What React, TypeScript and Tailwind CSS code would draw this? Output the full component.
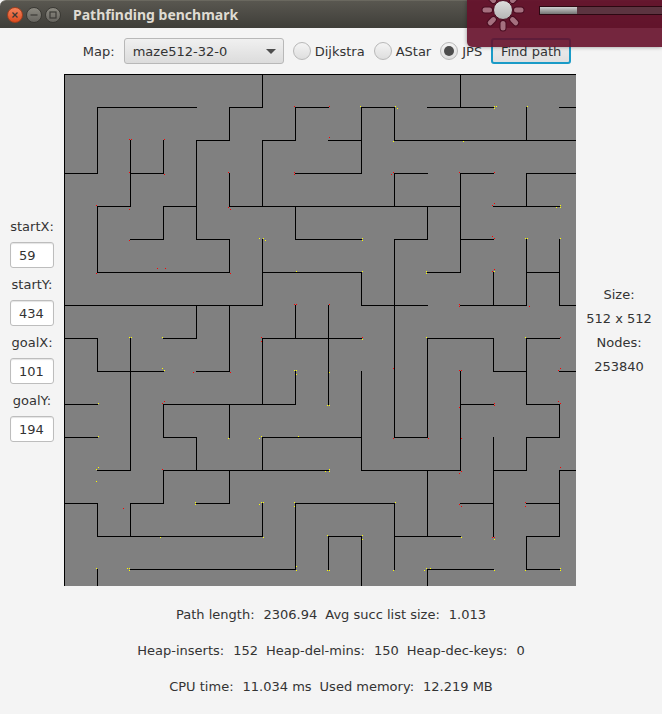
import { useState } from 'react';

const CELL = 33;
const SIZE = 512;

// Walls per grid line, as [from, to] in cells.
const horizontalWalls: number[][][] = [
  [[0, 16]],
  [[1, 4], [5, 6], [7, 8], [9, 10], [11, 13], [15, 16]],
  [[4, 5], [6, 7], [8, 9], [10, 16]],
  [[0, 1], [2, 3], [7, 9], [10, 11], [12, 13], [14, 16]],
  [[1, 2], [3, 4], [5, 12], [13, 15]],
  [[2, 3], [4, 5], [7, 9], [10, 11], [12, 13]],
  [[1, 5], [6, 9], [11, 12], [14, 15]],
  [[0, 6], [9, 11], [12, 14], [15, 16]],
  [[0, 1], [3, 4], [6, 9], [11, 13], [14, 15]],
  [[1, 3], [4, 5], [13, 14], [15, 16]],
  [[0, 1], [3, 7], [12, 13], [14, 15]],
  [[0, 1], [3, 4], [6, 9], [10, 11], [14, 15]],
  [[1, 2], [3, 8], [9, 12], [13, 14], [15, 16]],
  [[0, 1], [2, 3], [4, 5], [7, 10], [12, 13], [14, 15]],
  [[1, 6], [8, 9], [10, 12], [14, 15]],
  [[2, 7], [11, 13], [14, 15]],
];

const verticalWalls: number[][][] = [
  [[0, 16]],
  [[1, 3], [4, 6], [8, 9], [13, 14], [15, 16]],
  [[2, 4], [8, 12], [13, 14]],
  [[2, 3], [4, 5], [10, 11], [12, 13]],
  [[2, 5], [7, 8], [11, 12]],
  [[1, 2], [3, 4], [5, 6], [7, 9], [10, 11], [12, 13]],
  [[0, 1], [2, 4], [5, 7], [8, 10], [11, 12], [13, 14]],
  [[1, 2], [4, 5], [7, 8], [9, 10], [13, 15]],
  [[7, 10], [14, 15]],
  [[1, 3], [6, 7], [9, 12], [14, 16]],
  [[1, 2], [3, 4], [5, 11], [13, 15]],
  [[4, 5], [8, 11], [12, 14], [15, 16]],
  [[0, 1], [3, 6], [9, 12]],
  [[6, 7], [8, 9], [11, 14]],
  [[1, 2], [3, 4], [5, 7], [8, 10], [11, 12], [14, 15]],
  [[5, 7], [10, 11], [12, 14]],
];

const closedNodes: number[][] = [
  [65, 65], [67, 65], [100, 65], [65, 98], [100, 100], [32, 131], [65, 135], [65, 166],
  [164, 98], [164, 133], [166, 135], [230, 32], [265, 32], [265, 63], [230, 98], [230, 100],
  [329, 98], [327, 100], [395, 98], [430, 98], [430, 129], [428, 131], [428, 162], [430, 164],
  [93, 194], [101, 194], [32, 199], [166, 199], [129, 298], [166, 298], [100, 327], [98, 329],
  [230, 230], [232, 230], [265, 230], [197, 263], [197, 267], [298, 263], [329, 294],
  [430, 195], [428, 197], [395, 230], [395, 232], [465, 232], [496, 263], [496, 294], [494, 296],
  [395, 296], [397, 296], [430, 329], [430, 331], [494, 327], [496, 329], [395, 333],
  [98, 395], [59, 434], [329, 364], [364, 364], [397, 364], [496, 393], [397, 397], [395, 399],
  [395, 430], [397, 432], [461, 428], [461, 432], [428, 463], [430, 463],
];

const openNodes: number[][] = [
  [296, 32], [331, 32], [333, 34], [329, 67], [195, 164], [199, 164], [201, 166], [298, 164],
  [298, 166], [430, 32], [432, 32], [430, 34], [463, 32], [399, 67], [496, 131], [492, 133],
  [496, 133], [461, 164], [463, 164], [496, 164], [65, 263], [67, 263], [98, 263], [98, 294],
  [100, 296], [34, 329], [232, 197], [298, 197], [298, 265], [230, 296], [232, 296], [232, 300],
  [265, 298], [263, 331], [265, 331], [362, 197], [362, 199], [430, 197], [362, 263], [461, 263],
  [34, 362], [34, 393], [32, 395], [32, 407], [164, 364], [131, 428], [131, 430], [96, 463],
  [32, 494], [63, 494], [65, 494], [65, 496], [197, 362], [195, 364], [234, 362], [265, 395],
  [261, 397], [265, 397], [197, 428], [199, 428], [195, 430], [199, 463], [230, 428], [230, 432],
  [331, 428], [232, 492], [232, 496], [263, 461], [298, 461], [298, 465], [263, 496], [265, 496],
  [329, 496], [430, 465], [397, 463], [362, 494], [366, 494], [360, 496], [430, 496], [461, 496],
  [496, 494], [496, 496],
];

function MazeMap() {
  return (
    <svg viewBox={`0 0 ${SIZE} ${SIZE}`} shapeRendering="crispEdges" className="block w-full bg-[#808080]" role="img" aria-label="maze512-32-0">
      {horizontalWalls.flatMap((walls, row) =>
        walls.map(([from, to]) => (
          <rect key={`h${row}-${from}`} x={from * CELL} y={row * CELL} width={(to - from) * CELL + 1} height={1} />
        )),
      )}
      {verticalWalls.flatMap((walls, col) =>
        walls.map(([from, to]) => (
          <rect key={`v${col}-${from}`} x={col * CELL} y={from * CELL} width={1} height={(to - from) * CELL + 1} />
        )),
      )}
      {closedNodes.map(([x, y]) => (
        <rect key={`c${x}-${y}`} x={x} y={y} width={1} height={1} fill="#ff0000" />
      ))}
      {openNodes.map(([x, y]) => (
        <rect key={`o${x}-${y}`} x={x} y={y} width={1} height={1} fill="#ffff00" />
      ))}
    </svg>
  );
}

function WindowButton({ label, close, children }: { label: string; close?: boolean; children: React.ReactNode }) {
  return (
    <button
      aria-label={label}
      className={`size-4 rounded-full border ${
        close
          ? 'border-[#a33f1e] bg-linear-to-b from-[#f3835b] to-[#dd4a1b]'
          : 'border-[#3a3934] bg-linear-to-b from-[#8b8981] to-[#67655f]'
      }`}
    >
      <svg viewBox="0 0 14 14" className="block size-full" fill="none" stroke="#3b3a36">
        {children}
      </svg>
    </button>
  );
}

function TitleBar() {
  return (
    <header className="flex h-7 items-center rounded-tl-md border-t border-[#6a685f] bg-linear-to-b from-[#595750] to-[#3f3e39] pl-[7px]">
      <div className="flex gap-[3px]">
        <WindowButton label="Close" close>
          <path d="M4.5 4.5l5 5M9.5 4.5l-5 5" strokeWidth="1.3" />
        </WindowButton>
        <WindowButton label="Minimize">
          <path d="M3.5 7h7" strokeWidth="1.2" />
        </WindowButton>
        <WindowButton label="Maximize">
          <rect x="4" y="4" width="6" height="6" strokeWidth="1.2" />
        </WindowButton>
      </div>
      <h1 className="ml-3 font-['Noto_Sans','Open_Sans',sans-serif] text-[14px] leading-5 font-bold text-[#dfdbd2]">
        Pathfinding benchmark
      </h1>
    </header>
  );
}

const algorithms = ['Dijkstra', 'AStar', 'JPS'];

function Toolbar() {
  const [algorithm, setAlgorithm] = useState('JPS');
  return (
    <div className="flex items-center justify-center gap-[9px] py-2.5 pr-2">
      <label htmlFor="map">
        Map:
      </label>
      <div className="relative">
        <select
          id="map"
          className="block h-[26px] w-40 appearance-none rounded-[3px] border border-[#b8b8b8] bg-linear-to-b from-[#f0f0f0] to-[#dcdcdc] pt-0.5 pl-2 leading-4"
        >
          <option>maze512-32-0</option>
        </select>
        <svg viewBox="0 0 10 5" className="pointer-events-none absolute top-[11px] right-2 w-2.5" fill="#4d4d4d">
          <path d="M0 0h10L5 5z" />
        </svg>
      </div>
      {algorithms.map((name) => (
        <label key={name} className="flex items-center gap-1">
          <input
            type="radio"
            name="algorithm"
            checked={algorithm === name}
            onChange={() => setAlgorithm(name)}
            className="grid size-[18px] appearance-none place-items-center rounded-full border border-[#b8b8b8] bg-linear-to-b from-[#f4f4f4] to-[#dedede] before:size-2.5 before:rounded-full checked:before:bg-[#4d4d4d]"
          />
          <span>{name}</span>
        </label>
      ))}
      <button className="h-[26px] w-20 rounded-[3px] border-2 border-[#1a9bc7] bg-linear-to-b from-[#f0f0f0] to-[#e0e0e0] pt-0.5 leading-4">
        Find path
      </button>
    </div>
  );
}

const coordinates = [
  { name: 'startX', value: '59' },
  { name: 'startY', value: '434' },
  { name: 'goalX', value: '101' },
  { name: 'goalY', value: '194' },
];

function CoordinateForm() {
  return (
    <form className="flex w-16 shrink-0 flex-col gap-2 px-2.5">
      {coordinates.map(({ name, value }) => (
        <div key={name} className="flex flex-col items-center gap-[7px]">
          <label htmlFor={name}>{name}:</label>
          <input
            id={name}
            defaultValue={value}
            className="h-[26px] w-full rounded-[3px] border border-[#bdbdbd] bg-white px-2 shadow-[inset_0_1px_1px_#e4e4e4]"
          />
        </div>
      ))}
    </form>
  );
}

const results = [
  [['Path length:', '2306.94'], ['Avg succ list size:', '1.013']],
  [['Heap-inserts:', '152'], ['Heap-del-mins:', '150'], ['Heap-dec-keys:', '0']],
  [['CPU time:', '11.034 ms'], ['Used memory:', '12.219 MB']],
];

function Results() {
  return (
    <footer className="flex flex-col gap-[19px] pt-5 pb-[19px]">
      {results.map((line) => (
        <dl key={line[0][0]} className="flex justify-center gap-2">
          {line.map(([name, value]) => (
            <div key={name} className="flex gap-[9px]">
              <dt>{name}</dt>
              <dd>{value}</dd>
            </div>
          ))}
        </dl>
      ))}
    </footer>
  );
}

function BrightnessNotification() {
  return (
    <aside
      aria-label="Brightness"
      className="absolute top-0 right-0 h-[47px] w-[195px] overflow-hidden rounded-bl-[5px] bg-[#66102a]/90 shadow-[0_0_4px_#00000066]"
    >
      <svg viewBox="0 0 195 47" className="block h-full w-full">
        <defs>
          <linearGradient id="sun" x1="0" y1="0" x2="0" y2="1">
            <stop offset="0" stopColor="#dedede" />
            <stop offset="1" stopColor="#b4b4b4" />
          </linearGradient>
          <linearGradient id="level" x1="0" y1="0" x2="0" y2="1">
            <stop offset="0" stopColor="#d0d0d0" />
            <stop offset="1" stopColor="#747474" />
          </linearGradient>
        </defs>
        {[0, 45, 90, 135, 180, 225, 270, 315].map((angle) => (
          <g key={angle} transform={`rotate(${angle} 36 10)`} strokeLinecap="round">
            <path d="M36 23.5v4.5" stroke="#480c20" strokeWidth="7" />
            <path d="M36 23.5v4.5" stroke="#a5707f" strokeWidth="5" />
          </g>
        ))}
        <circle cx="36" cy="10" r="9.5" fill="url(#sun)" stroke="#480c20" strokeWidth="1" />
        <rect x="72" y="6" width="130" height="9" fill="#2c0812" />
        <rect x="73" y="7" width="129" height="7" fill="#5c3440" />
        <rect x="73" y="7" width="37" height="7" fill="url(#level)" />
      </svg>
    </aside>
  );
}

export default function App() {
  return (
    <div className="relative min-h-screen bg-[#f4f4f4] font-['DejaVu_Sans',sans-serif] text-[13px] leading-[17px] text-[#333333]">
      <TitleBar />
      <Toolbar />
      <main className="flex items-center">
        <CoordinateForm />
        <div className="min-w-0 flex-1">
          <MazeMap />
        </div>
        <div className="flex w-[86px] shrink-0 flex-col items-center gap-[7px] pt-px">
          <span>Size:</span>
          <span>512 x 512</span>
          <span>Nodes:</span>
          <span>253840</span>
        </div>
      </main>
      <Results />
      <BrightnessNotification />
    </div>
  );
}
